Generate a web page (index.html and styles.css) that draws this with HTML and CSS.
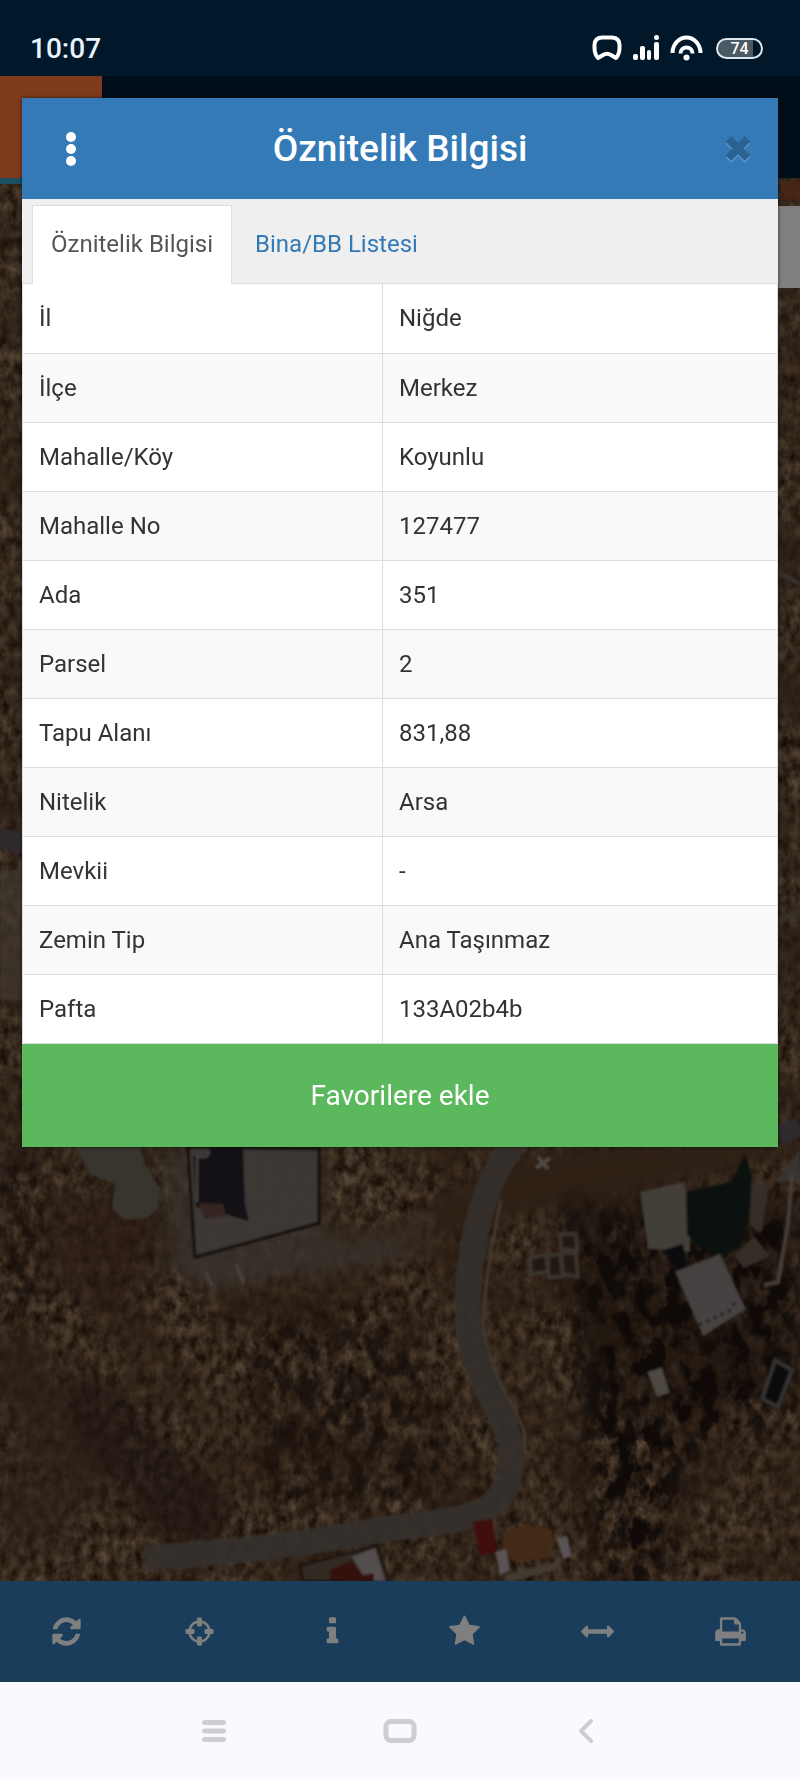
FILE: index.html
```html
<!DOCTYPE html>
<html lang="tr">
<head>
    <meta charset="UTF-8">
    <meta name="viewport" content="width=device-width, initial-scale=1.0">
    <title>Öznitelik Bilgisi</title>
    <link rel="stylesheet" href="styles.css">
</head>
<body>
    <div class="status-bar">
        <span class="clock">10:07</span>
        <div class="status-icons">
            <svg width="30" height="26" viewBox="0 0 30 26"><path d="M10 2.500h10Q27.500 3 27.500 10v3Q27.500 19 24 23L19 20Q15 17.500 11 20L6 23Q2.500 19 2.500 13v-3Q2.500 3 10 2.500z" fill="none" stroke="#fff" stroke-width="4" stroke-linejoin="round"/></svg>
            <svg width="26" height="26" viewBox="0 0 26 26" fill="#fff"><rect x="0" y="19" width="5" height="6" rx="2"/><rect x="7" y="11" width="5" height="14" rx="2"/><rect x="14" y="15" width="4" height="10" rx="2"/><rect x="21" y="7" width="5" height="18" rx="2"/><circle cx="23.500" cy="2.500" r="2.500"/></svg>
            <svg width="33" height="26" viewBox="0 0 33 26" fill="none" stroke="#fff" stroke-width="4"><path d="M2.500 18A14 15.500 0 0 1 30.500 18"/><path d="M10.500 18.500a6 6 0 0 1 12 0"/><circle cx="16.500" cy="22.500" r="3" fill="#fff" stroke="none"/></svg>
            <span class="battery">74</span>
        </div>
    </div>

    <div class="app">
        <header class="app-header">
            <div class="logo"></div>
        </header>
        <main class="map">
            <svg class="map-image" viewBox="0 178 800 1403" preserveAspectRatio="xMidYMid slice" aria-hidden="true">
                <defs>
                    <filter id="ground" x="0" y="0" width="100%" height="100%" color-interpolation-filters="sRGB">
                        <feTurbulence type="fractalNoise" baseFrequency="0.110 0.080" numOctaves="4" seed="8"/>
                        <feColorMatrix values="0.750 0 0 0 0.050  0.670 0 0 0 -0.010  0.550 0 0 0 -0.040  0 0 0 0 1"/>
                    </filter>
                    <filter id="patches" x="0" y="0" width="100%" height="100%" color-interpolation-filters="sRGB">
                        <feTurbulence type="fractalNoise" baseFrequency="0.012" numOctaves="3" seed="5"/>
                        <feColorMatrix values="0 0 0 0 0.340  0 0 0 0 0.230  0 0 0 0 0.150  2.500 0 0 0 -0.900"/>
                    </filter>
                    <filter id="shrubs" color-interpolation-filters="sRGB">
                        <feGaussianBlur in="SourceGraphic" stdDeviation="14" result="area"/>
                        <feTurbulence type="fractalNoise" baseFrequency="0.060 0.040" numOctaves="4" seed="21"/>
                        <feColorMatrix values="0 0 0 0 0.120  0 0 0 0 0.080  0 0 0 0 0.060  5 0 0 0 -2.100"/>
                        <feComposite in2="area" operator="in"/>
                    </filter>
                    <filter id="soft"><feGaussianBlur stdDeviation="8"/></filter>
                    <filter id="edge"><feGaussianBlur stdDeviation="1"/></filter>
                </defs>
                <rect y="178" width="800" height="1403" filter="url(#ground)"/>
                <rect y="178" width="800" height="1403" filter="url(#patches)" opacity="0.700"/>

                <!-- soil -->
                <g filter="url(#soft)">
                    <path d="M40 1180l130 20 10 70-80 40-60-30z" fill="#4d3423" opacity="0.500"/>
                    <path d="M60 1370l60 20 110 110-10 50-60-20-90-90z" fill="#38241a" opacity="0.600"/>
                    <path d="M430 1200l110-50 240-8v15l-170 40-170 40z" fill="#5c402c"/>
                    <path d="M310 1240l120-30v45l-130 15z" fill="#665240" opacity="0.800"/>
                    <path d="M0 1330l50 10 60 150-40 70H0z" fill="#5a4030" opacity="0.400"/>
                    <path d="M160 1148h160l10 100-120 40-40-20z" fill="#71665a" opacity="0.700"/>
                    <path d="M160 1262l240-22v22l-180 28z" fill="#73685b" opacity="0.600"/>
                    <path d="M560 1200h240v180l-170 50-50-60z" fill="#30231c" opacity="0.500"/>
                </g>
                <path d="M570 1215l230-10v210l-110 40-30 130h-65l-15-190z" filter="url(#shrubs)"/>
                <path d="M245 1310h160l60 180-200 20z" filter="url(#shrubs)" opacity="0.600"/>
                <path d="M0 1150h40v180H0z" filter="url(#shrubs)" opacity="0.600"/>

                <!-- roads -->
                <g filter="url(#edge)">
                    <path d="M515 1140C475 1195 466 1270 468 1320C470 1380 516 1420 511 1465C507 1515 470 1520 390 1528C300 1545 230 1553 145 1558" fill="none" stroke="#6a615a" stroke-width="26" opacity="0.900"/>
                    <path d="M501 1200C484 1280 480 1330 487 1345C500 1400 531 1420 524 1450" fill="none" stroke="#857461" stroke-width="3"/>
                    <path d="M0 838l24 6M778 1136l22-10" stroke="#5c545c" stroke-width="20"/>
                    <path d="M775 1182l22-30h3v28z" fill="#706860"/>
                    <path d="M778 922l22-12M778 572l22 12" stroke="#6d6259" stroke-width="5"/>
                    <path d="M0 870h24v130H0z" fill="#80715f" opacity="0.700"/>
                </g>

                <!-- buildings -->
                <g filter="url(#edge)">
                    <path d="M74 1146h66l4 18 16 24-2 20-10 10-24 2-12-12 3-24-24-10z" fill="#716a5c"/>
                    <path d="M188 1147l131 2v74l-124 34z" fill="#7b736e" stroke="#281c19" stroke-width="3" fill-opacity="0.850"/>
                    <path d="M193 1156l16-1 1-7h33l2 56 4 17-22-6-31-8z" fill="#25202c"/>
                    <path d="M199 1203l24 1 3 12-21 3z" fill="#6a4b40"/>
                    <path d="M197 1155v47M210 1152l-4 5h-10" stroke="#8a8484" stroke-width="2" fill="none"/>
                    <path d="M236 1264l8 20M206 1272l6 14" stroke="#8c7f73" stroke-width="4"/>
                    <path d="M538 1157l10 12M550 1158l-14 10M344 1173l6 10" stroke="#a39388" stroke-width="4"/>
                    <path d="M640 1192l44-10 7 32-1 38-42-3z" fill="#857c70"/>
                    <path d="M686 1192l45-10 14-28 10 33-14 58-22 14-24-15-8-10z" fill="#18241c"/>
                    <path d="M663 1250l20-6 5 24-10 4z" fill="#17191c"/>
                    <path d="M675 1272l45-18 26 55-43 27z" fill="#8a8582"/>
                    <path d="M699 1325l30-14 7-10" fill="none" stroke="#3b302c" stroke-width="3" stroke-dasharray="3 5"/>
                    <path d="M734 1256l20-20 16 20-26 12zM752 1180l17 8-8 45-12-8z" fill="#6a5d4f"/>
                    <path d="M792 1174l-4 50-10 58-14 3" fill="none" stroke="#8a7d72" stroke-width="4"/>
                    <path d="M530 1258l18-4 0 18-17 2zM546 1256l14-2 3 22-14 2zM560 1234l16 0 1 17-16-2zM561 1253l15 0 2 24-15-3z" fill="#3d3026" stroke="#75685a" stroke-width="4"/>
                    <path d="M647 1372l15-5 8 26-13 4z" fill="#9a9082"/>
                    <path d="M775 1360l17 10-14 37-16-8z" fill="#12161c" stroke="#6b6562" stroke-width="4"/>
                    <path d="M473 1522l19-3 5 33-17 4z" fill="#801a1b"/>
                    <path d="M503 1534l22-10 28 6-4 28-34 4-12-10z" fill="#85552f"/>
                    <path d="M496 1552l10-3 4 22-10 4zM557 1538l10-2 5 20-9 3z" fill="#b5a7aa"/>
                    <path d="M508 1574l50-12v7l-44 12h-10z" fill="#857664"/>
                    <path d="M300 1566l77-20 12 35h-86z" fill="#655347" stroke="#2a1b19" stroke-width="2"/>
                    <path d="M352 1557l23-9 10 33h-18z" fill="#a89d9d"/>
                    <path d="M330 1570l22-10 10 15 12-2v8h-44z" fill="#6b211d"/>
                    <path d="M780 184l20-5v22l-16-2z" fill="#8f4a2a"/>
                </g>
                <g fill="none" stroke="#2a201d" stroke-width="10" opacity="0.500" filter="url(#soft)">
                    <path d="M565 1200l30 30 22 60M590 1290l12 60-10 30 40 40M590 1370l3 50-15 60 8 30"/>
                </g>
            </svg>
            <div class="map-panel"></div>
        </main>
        <nav class="toolbar">
            <button type="button" aria-label="Yenile"><svg viewBox="0 0 1792 1792"><path d="M1639 1056q0 5-1 7-64 268-268 434.500T892 1664q-146 0-282.500-55T366 1452l-129 129q-19 19-45 19t-45-19-19-45v-448q0-26 19-45t45-19h448q26 0 45 19t19 45-19 45l-137 137q71 66 161 102t187 36q134 0 250-65t186-179q11-17 53-117 8-23 30-23h192q13 0 22.500 9.500t9.500 22.500zm25-800v448q0 26-19 45t-45 19h-448q-26 0-45-19t-19-45 19-45l138-138Q1069 384 896 384q-134 0-250 65T460 628q-11 17-53 117-8 23-30 23H178q-13 0-22.500-9.500T146 736v-7q65-268 270-434.500T896 128q146 0 284 55.500T1425 340l130-129q19-19 45-19t45 19 19 45z"/></svg></button>
            <button type="button" aria-label="Konumum"><svg viewBox="0 0 33 33"><circle cx="16.500" cy="16.500" r="10" fill="none" stroke="currentColor" stroke-width="2.500"/><rect x="14" y="2.500" width="5" height="9" rx="1"/><rect x="14" y="21.500" width="5" height="9" rx="1"/><rect x="2.500" y="14" width="9" height="5" rx="1"/><rect x="21.500" y="14" width="9" height="5" rx="1"/></svg></button>
            <button type="button" aria-label="Bilgi"><svg viewBox="0 0 1792 1792"><path d="M1216 1344v128q0 26-19 45t-45 19H640q-26 0-45-19t-19-45v-128q0-26 19-45t45-19h64V896h-64q-26 0-45-19t-19-45V704q0-26 19-45t45-19h384q26 0 45 19t19 45v576h64q26 0 45 19t19 45zm-128-1152v192q0 26-19 45t-45 19H768q-26 0-45-19t-19-45V192q0-26 19-45t45-19h256q26 0 45 19t19 45z"/></svg></button>
            <button type="button" aria-label="Favoriler"><svg viewBox="0 0 1792 1792"><path d="M1728 647q0 22-26 48l-363 354 86 500q1 7 1 20 0 21-10.500 35.500T1385 1619q-19 0-40-12l-449-236-449 236q-22 12-40 12-21 0-31.500-14.500T365 1569q0-6 2-20l86-500L89 695q-25-27-25-48 0-37 56-46l502-73L847 73q19-41 49-41t49 41l225 455 502 73q56 9 56 46z"/></svg></button>
            <button type="button" aria-label="Ölç"><svg viewBox="0 0 1792 1792"><path d="M1792 896q0 26-19 45l-256 256q-19 19-45 19t-45-19-19-45v-128H384v128q0 26-19 45t-45 19-45-19L19 941Q0 922 0 896t19-45l256-256q19-19 45-19t45 19 19 45v128h1024V640q0-26 19-45t45-19 45 19l256 256q19 19 19 45z"/></svg></button>
            <button type="button" aria-label="Yazdır"><svg viewBox="0 0 1792 1792"><path d="M448 1536h896v-256H448v256zm0-640h896V512h-160q-40 0-68-28t-28-68V256H448v640zm1152 64q0-26-19-45t-45-19-45 19-19 45 19 45 45 19 45-19 19-45zm128 0v416q0 13-9.500 22.500t-22.500 9.500h-224v160q0 40-28 68t-68 28H416q-40 0-68-28t-28-68v-160H96q-13 0-22.500-9.500T64 1376V960q0-79 56.500-135.500T256 768h64V224q0-40 28-68t68-28h672q40 0 88 20t76 48l152 152q28 28 48 76t20 88v256h64q79 0 135.500 56.500T1728 960z"/></svg></button>
        </nav>

        <!-- modal -->
        <div class="backdrop">
            <div class="modal" role="dialog" aria-labelledby="modal-title">
                <div class="modal-header">
                    <button type="button" class="menu-button" aria-label="Menü">
                        <svg width="12" height="36" viewBox="0 0 12 36" fill="#fff"><circle cx="6" cy="6" r="5"/><circle cx="6" cy="18" r="5"/><circle cx="6" cy="30" r="5"/></svg>
                    </button>
                    <h1 id="modal-title">Öznitelik Bilgisi</h1>
                    <button type="button" class="close" aria-label="Kapat">
                        <svg width="28" height="30" viewBox="0 0 28 30" fill="none" stroke-width="8"><path d="M4.500 7l19 19M23.500 7l-19 19" stroke="#5a95c9"/><path d="M4.500 5l19 19M23.500 5l-19 19" stroke="#2a6292"/></svg>
                    </button>
                </div>
                <div class="tabs">
                    <a href="#oznitelik" class="tab active">Öznitelik Bilgisi</a>
                    <a href="#bina" class="tab">Bina/BB Listesi</a>
                </div>
                <table class="info-table" id="oznitelik">
                    <tbody>
                        <tr><th scope="row">İl</th><td>Niğde</td></tr>
                        <tr><th scope="row">İlçe</th><td>Merkez</td></tr>
                        <tr><th scope="row">Mahalle/Köy</th><td>Koyunlu</td></tr>
                        <tr><th scope="row">Mahalle No</th><td>127477</td></tr>
                        <tr><th scope="row">Ada</th><td>351</td></tr>
                        <tr><th scope="row">Parsel</th><td>2</td></tr>
                        <tr><th scope="row">Tapu Alanı</th><td>831,88</td></tr>
                        <tr><th scope="row">Nitelik</th><td>Arsa</td></tr>
                        <tr><th scope="row">Mevkii</th><td>-</td></tr>
                        <tr><th scope="row">Zemin Tip</th><td>Ana Taşınmaz</td></tr>
                        <tr><th scope="row">Pafta</th><td>133A02b4b</td></tr>
                    </tbody>
                </table>
                <button type="button" class="favorite-button">Favorilere ekle</button>
            </div>
        </div>
    </div>

    <nav class="system-nav">
        <button type="button" aria-label="Son uygulamalar"><svg width="24" height="24" viewBox="0 0 24 24" stroke="#cfcdd4" stroke-width="5" stroke-linecap="round"><path d="M2.500 3.500h19M2.500 12h19M2.500 20.500h19"/></svg></button>
        <button type="button" aria-label="Ana ekran"><svg width="34" height="26" viewBox="0 0 34 26" fill="none" stroke="#cfcdd4" stroke-width="5"><rect x="3" y="3.500" width="28" height="19" rx="5"/></svg></button>
        <button type="button" aria-label="Geri"><svg width="16" height="26" viewBox="0 0 16 26" fill="none" stroke="#cfcdd4" stroke-width="4" stroke-linecap="round" stroke-linejoin="round"><path d="M13 3L3 13l10 10"/></svg></button>
    </nav>
</body>
</html>
```

FILE: styles.css
```css
* {
    box-sizing: border-box;
}
body {
    font-family: Roboto, 'Liberation Sans', sans-serif;
    margin: 0;
    min-height: 100vh;
    display: flex;
    flex-direction: column;
    color: #333;
    font-size: 24px;
}
button {
    font-family: inherit;
    border: none;
    background: none;
    padding: 0;
    cursor: pointer;
}
svg {
    display: block;
}

/* status bar */
.status-bar {
    height: 76px;
    padding: 20px 37px 0 30px;
    display: flex;
    justify-content: space-between;
    align-items: center;
    background-color: #00182a;
    color: #e8f3fb;
}
.clock {
    font-size: 28px;
    font-weight: 500;
}
.status-icons {
    display: flex;
    align-items: center;
    gap: 11px;
}
.battery {
    width: 47px;
    height: 21px;
    margin-left: 2px;
    border: 2px solid #dce6ec;
    border-radius: 11px;
    background: linear-gradient(to right, #4b5964 82%, #00182a 82%);
    color: #fff;
    font-size: 16px;
    font-weight: 500;
    line-height: 18px;
    text-align: center;
}

/* application */
.app {
    position: relative;
    flex: 1;
    display: flex;
    flex-direction: column;
}
.app-header {
    height: 102px;
    background-color: #001c32;
}
.logo {
    position: relative;
    z-index: 1;
    width: 102px;
    height: 108px;
    background-color: #ff7436;
    border-bottom: 6px solid #3c9cc4;
}
.map {
    position: relative;
    flex: 1;
    overflow: hidden;
    background-color: #74583f;
}
.map-image {
    position: absolute;
    width: 100%;
    height: 100%;
}
.map-panel {
    position: absolute;
    top: 28px;
    right: 0;
    width: 60px;
    height: 82px;
    background-color: #fff;
}
.toolbar {
    display: grid;
    grid-template-columns: repeat(6, 1fr);
    height: 101px;
    padding-right: 3px;
    background-color: #337ab7;
}
.toolbar button {
    display: flex;
    align-items: center;
    justify-content: center;
    color: #fff;
}
.toolbar svg {
    width: 33px;
    height: 33px;
    fill: currentColor;
}

/* modal */
.backdrop {
    position: absolute;
    inset: 0;
    z-index: 2;
    padding: 22px;
    background-color: rgba(0, 0, 0, 0.5);
}
.modal {
    background-color: #fff;
    box-shadow: 0 0 4px rgba(0, 0, 0, 0.6);
}
.modal-header {
    display: grid;
    grid-template-columns: 98px 1fr 98px;
    align-items: center;
    height: 101px;
    background-color: #337ab7;
    color: #fff;
}
.modal-header h1 {
    margin: 0;
    font-size: 37px;
    font-weight: 500;
    text-align: center;
}
.menu-button,
.close {
    height: 60px;
    display: flex;
    align-items: center;
    justify-content: center;
}
.close {
    padding-left: 18px;
}
.tabs {
    display: flex;
    gap: 4px;
    height: 85px;
    padding: 6px 10px 0;
    background-color: #efefef;
    border-bottom: 1px solid #ddd;
}
.tab {
    height: 79px;
    padding: 0 18px;
    border: 1px solid transparent;
    line-height: 77px;
    color: #337ab7;
    text-decoration: none;
}
.tab.active {
    background-color: #fff;
    border-color: #ddd;
    border-bottom-color: #fff;
    color: #555;
}
.info-table {
    width: 100%;
    border-collapse: collapse;
    table-layout: fixed;
}
.info-table th,
.info-table td {
    height: 69px;
    padding: 0 16px;
    border: 1px solid #ddd;
    border-top: none;
    font-weight: 400;
    text-align: left;
}
.info-table th {
    width: 360px;
}
.info-table tr:nth-child(even) {
    background-color: #f9f9f9;
}
.favorite-button {
    display: block;
    width: 100%;
    height: 103px;
    background-color: #5cb85c;
    color: #fff;
    font-size: 28px;
}

/* android navigation */
.system-nav {
    display: flex;
    justify-content: center;
    height: 97px;
    background-color: #f9f9ff;
}
.system-nav button {
    width: 186px;
    display: flex;
    align-items: center;
    justify-content: center;
}
```
